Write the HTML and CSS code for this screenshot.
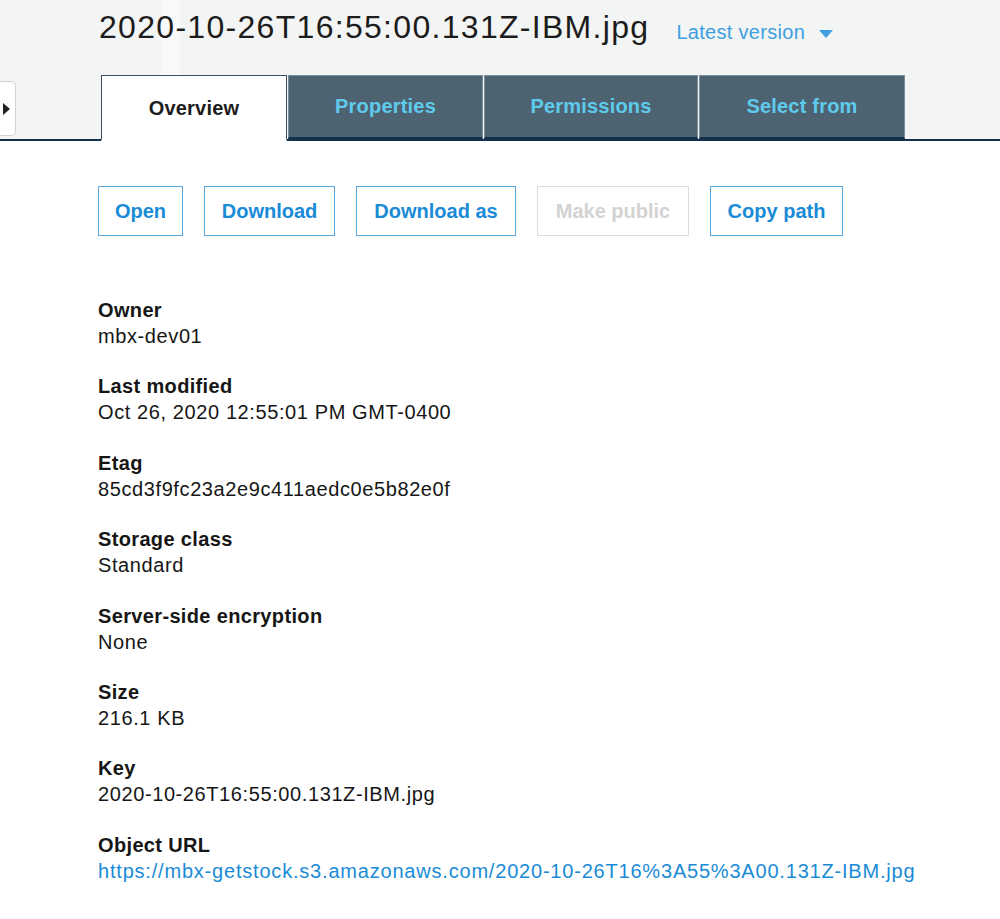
FILE: index.html
```html
<!DOCTYPE html>
<html lang="en">
<head>
<meta charset="utf-8">
<title>2020-10-26T16:55:00.131Z-IBM.jpg</title>
<link rel="stylesheet" href="styles.css">
</head>
<body>
<header class="header">
  <div class="title-row">
    <h1 class="title">2020-10-26T16:55:00.131Z-IBM.jpg</h1>
    <a class="version">Latest version <svg class="caret" width="14" height="8" viewBox="0 0 14 8"><path d="M0 0 H14 L7 8 Z" fill="#3d9fe0"/></svg></a>
  </div>
  <div class="tab-row">
    <div class="toggle"><svg width="7" height="12" viewBox="0 0 7 12"><path d="M0 0 L7 6 L0 12 Z" fill="#222"/></svg></div>
    <nav class="tabs">
      <div class="tab active">Overview</div>
      <div class="tab t-prop">Properties</div>
      <div class="tab t-perm">Permissions</div>
      <div class="tab t-sel">Select from</div>
    </nav>
  </div>
</header>
<main class="content">
  <div class="actions">
    <button class="btn b-open">Open</button>
    <button class="btn b-dl">Download</button>
    <button class="btn b-dlas">Download as</button>
    <button class="btn b-pub disabled">Make public</button>
    <button class="btn b-copy">Copy path</button>
  </div>
  <dl class="fields">
    <div class="field"><dt>Owner</dt><dd>mbx-dev01</dd></div>
    <div class="field"><dt>Last modified</dt><dd>Oct 26, 2020 12:55:01 PM GMT-0400</dd></div>
    <div class="field"><dt>Etag</dt><dd>85cd3f9fc23a2e9c411aedc0e5b82e0f</dd></div>
    <div class="field"><dt>Storage class</dt><dd>Standard</dd></div>
    <div class="field"><dt>Server-side encryption</dt><dd>None</dd></div>
    <div class="field"><dt>Size</dt><dd>216.1 KB</dd></div>
    <div class="field"><dt>Key</dt><dd>2020-10-26T16:55:00.131Z-IBM.jpg</dd></div>
    <div class="field"><dt>Object URL</dt><dd><a class="url">https://mbx-getstock.s3.amazonaws.com/2020-10-26T16%3A55%3A00.131Z-IBM.jpg</a></dd></div>
  </dl>
</main>
</body>
</html>
```

FILE: styles.css
```css
* { box-sizing: border-box; }
html, body { margin: 0; padding: 0; }
body {
  font-family: "Liberation Sans", Arial, Helvetica, sans-serif;
  color: #161616;
  background: #fff;
  width: 1000px;
}
.header {
  position: relative;
  background: #f3f4f4;
  border-bottom: 2px solid #13304c;
}
.header::before {
  content: "";
  position: absolute;
  left: 161px;
  top: 0;
  width: 19px;
  height: 75px;
  background: #f8f9f9;
}
.title-row {
  position: relative;
  display: flex;
  align-items: baseline;
  padding-left: 99px;
  height: 75px;
  padding-top: 7px;
}
.title {
  margin: 0;
  font-size: 32px;
  font-weight: 400;
  letter-spacing: 1.3px;
  line-height: 40px;
  color: #1c1c1c;
}
.version {
  margin-left: 27px;
  font-size: 20px;
  letter-spacing: 0.3px;
  color: #3d9fe0;
  display: flex;
  align-items: center;
  gap: 14px;
  position: relative;
  top: 1px;
}
.caret { position: relative; top: 1px; }
.tab-row {
  display: flex;
  align-items: flex-end;
  height: 64px;
}
.toggle {
  width: 16px;
  height: 55px;
  margin-bottom: 3px;
  background: #fff;
  border: 1px solid #d0d2d4;
  border-left: none;
  border-radius: 0 5px 5px 0;
  display: flex;
  align-items: center;
  padding-left: 3px;
}
.tabs {
  display: flex;
  margin-left: 85px;
  margin-bottom: -2px;
  gap: 1px;
}
.tab {
  height: 64px;
  display: flex;
  align-items: center;
  justify-content: center;
  font-size: 20px;
  font-weight: 700;
  letter-spacing: 0.2px;
  color: #5fcbec;
  background: #4e6372;
  border: 1px solid #7b8f9c;
  border-bottom: 2px solid #13304c;
  padding-bottom: 0;
}
.tab.active {
  width: 186px;
  height: 66px;
  background: #fff;
  color: #1c1c1c;
  border: 1px solid #3b4f62;
  border-bottom: 2px solid #fff;
  padding-top: 2px;
}
.t-prop { width: 195px; }
.t-perm { width: 214px; }
.t-sel { width: 206px; }
.content {
  padding: 45px 0 0 98px;
}
.actions {
  display: flex;
  gap: 21px;
}
.btn {
  height: 50px;
  background: #fff;
  border: 1px solid #5ba8e0;
  color: #1a8bd6;
  font-family: inherit;
  font-size: 20px;
  font-weight: 700;
  padding: 0;
  display: flex;
  align-items: center;
  justify-content: center;
}
.b-open { width: 85px; }
.b-dl { width: 131px; }
.b-dlas { width: 160px; }
.b-pub { width: 152px; }
.b-copy { width: 133px; }
.btn.disabled {
  color: #d3d3d3;
  border-color: #dcdcdc;
}
.fields {
  margin: 61px 0 0;
  display: flex;
  flex-direction: column;
  gap: 24.4px;
}
.field dt {
  font-size: 20px;
  font-weight: 700;
  letter-spacing: 0.35px;
  line-height: 26px;
  color: #161616;
}
.field dd {
  margin: 0;
  font-size: 20px;
  letter-spacing: 0.6px;
  line-height: 26px;
  color: #161616;
}
.url { color: #1a8bd6; letter-spacing: 0.8px; }
```
